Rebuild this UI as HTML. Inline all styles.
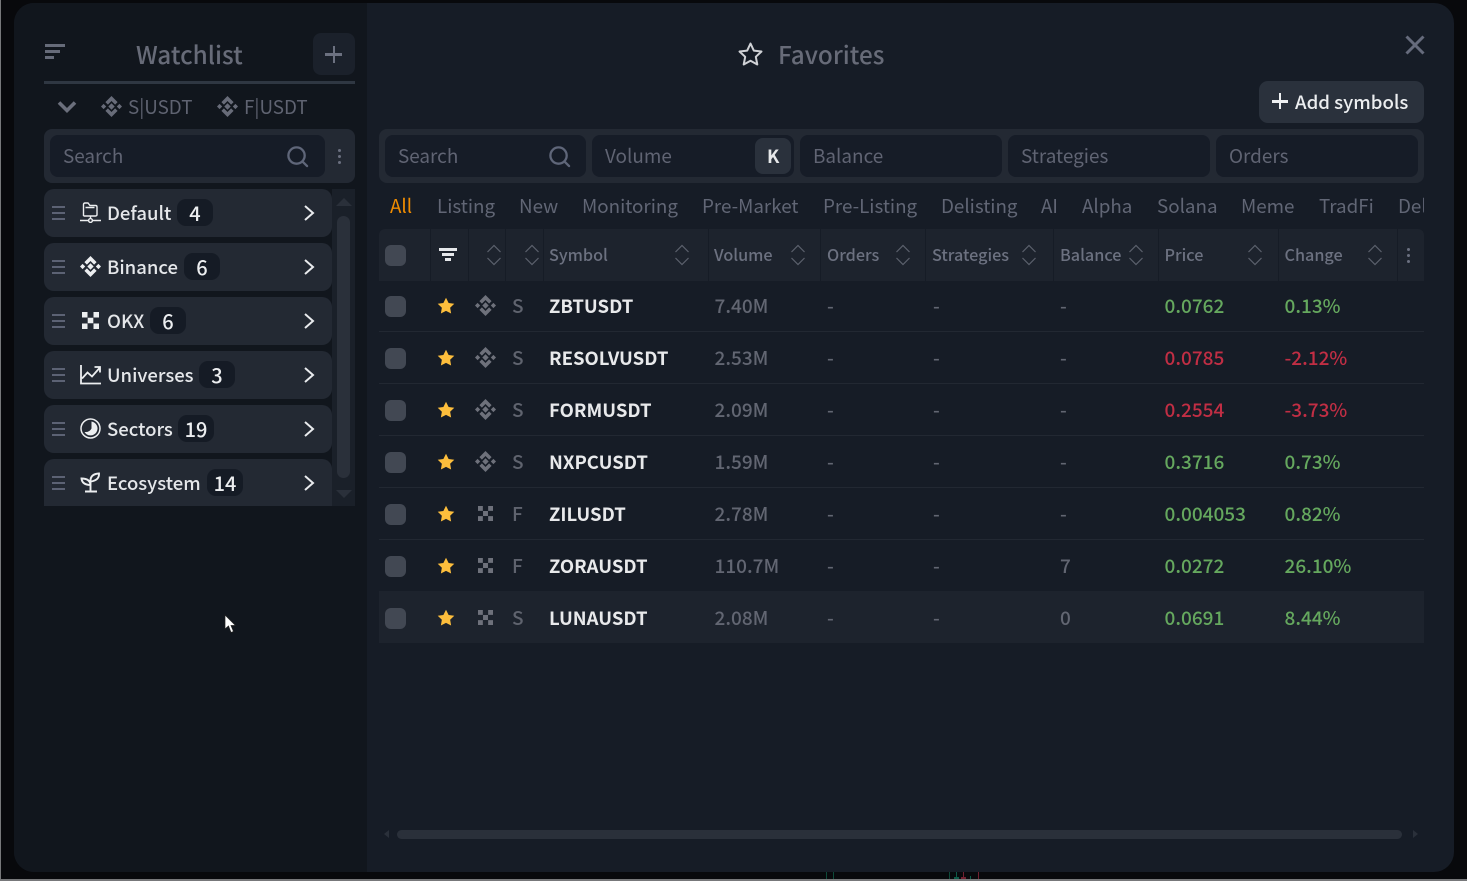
<!DOCTYPE html>
<html lang="en"><head><meta charset="utf-8"><title>Favorites</title>
<style>
*{box-sizing:border-box;margin:0;padding:0}
html,body{width:1467px;height:881px;overflow:hidden;background:#08090c}
body{position:relative;font-family:"Noto Sans CJK SC","Noto Sans CJK JP","Liberation Sans",sans-serif;font-size:19px;color:#6a6e7b}
.a,.t,svg{position:absolute}
.t{line-height:0;white-space:nowrap}
#edgeL{left:0;top:0;width:1px;height:881px;background:#77787a}
#edgeB{left:0;top:879px;width:1467px;height:2px;background:#77787a}
#modal{left:14px;top:3px;width:1440px;height:869px;background:#161c26;border-radius:20px;overflow:hidden}
#side{left:14px;top:3px;width:353px;height:869px;background:#11161d;border-radius:20px 0 0 20px}
.box{background:#232933;border-radius:8px}
.inp{background:#161c27;border-radius:8px;top:135px;height:42px}
.item{left:44px;width:288px;height:48px;background:#232933;border-radius:10px}
.item .nm{left:63px;top:23.500px;color:#e5e7ea;font-size:18.500px;font-weight:500}
.item .ct{top:10px;height:27px;width:36px;background:#151b25;border-radius:9px;color:#eceef0;font-size:20px;font-weight:500;text-align:center;line-height:27px}
.item .ic{left:36px;top:13px;width:21px;height:21px;color:#eceef0}
.item .hm{left:8px;top:17px;width:13px;height:14px;background:repeating-linear-gradient(#5c6274 0 2px,transparent 2px 6px)}
.item .ch{left:258px;top:15px;width:14px;height:18px}
.ph{font-size:18.900px;color:#606473;top:155.500px}
.tb{font-size:18.800px;color:#616675;top:15.500px}
.sep{top:229px;width:1px;height:52px;background:#161c26}
.th{top:254px;font-size:16.200px;font-weight:500;color:#6c7180}
.sort{top:244px;width:16px;height:22px}
.row{left:379px;width:1045px;height:52px;border-bottom:1px solid #222832}
.row .t{top:26px}
.cb{left:6px;top:16px;width:21px;height:21px;background:#424853;border-radius:6px}
.st{left:58px;top:17px;width:18px;height:18px}
.ex{left:96px;top:15px;width:21px;height:21px;color:#6e717b}
.ok{left:99px;top:18px;width:15px;height:15px}
.ty{left:133px;font-size:19px;font-weight:500;color:#5f636e}
.sy{left:170px;font-size:18.500px;font-weight:700;color:#e8e9eb}
.vo{left:335.500px;color:#626672;font-weight:500}
.or{left:448px;color:#626672;font-weight:500}
.sr{left:554px;color:#626672;font-weight:500}
.ba{left:681px;color:#626672;font-weight:500}
.pr{left:785.500px;font-weight:500}
.cg{left:905.500px;font-weight:500}
.g{color:#65a85e}.r{color:#c12e44}
</style></head><body>
<svg width="0" height="0" style="position:absolute"><defs>
<symbol id="bn" viewBox="0 0 21 21"><path fill="currentColor" d="M10.500 0 16.600 6.100 14.100 8.600 10.500 5 6.900 8.600 4.400 6.100ZM10.500 21 4.400 14.900 6.900 12.400 10.500 16 14.100 12.400 16.600 14.900ZM2.600 7.900 5.200 10.500 2.600 13.100 0 10.500ZM18.400 7.900 21 10.500 18.400 13.100 15.800 10.500ZM10.500 7.300 13.700 10.500 10.500 13.700 7.300 10.500Z"/></symbol>
<symbol id="ok" viewBox="0 0 17 17"><path fill="currentColor" d="M0 0h5.500v5.500H0zM11.500 0H17v5.500h-5.500zM5.700 5.700h5.600v5.600H5.700zM0 11.500h5.500V17H0zM11.500 11.500H17V17h-5.500z"/></symbol>
<symbol id="star" viewBox="0 0 20 20"><path fill="#fdbe3c" d="M10 .8 12.900 6.600 19.200 7.500 14.600 12 15.700 18.400 10 15.400 4.300 18.400 5.400 12 .8 7.500 7.100 6.600Z"/></symbol>
<symbol id="srt" viewBox="0 0 16 22"><path fill="none" stroke="#5c616d" stroke-width="1.200" d="M1.500 8 8 1.500 14.500 8M1.500 14 8 20.500 14.500 14"/></symbol>
<symbol id="chv" viewBox="0 0 14 18"><path fill="none" stroke="#e8eaed" stroke-width="2" d="M3 2 11 9 3 16"/></symbol>
<symbol id="mag" viewBox="0 0 24 24"><circle cx="11" cy="11" r="8.500" fill="none" stroke="#5f6679" stroke-width="2.400"/><path stroke="#5f6679" stroke-width="2.400" stroke-linecap="round" d="M17.500 17.500 22 22"/></symbol>
</defs></svg>

<div class="a" id="edgeL"></div><div class="a" id="edgeB"></div>
<div class="a" style="left:826px;top:872px;width:1px;height:7px;background:#0d4a3a"></div>
<div class="a" style="left:833px;top:872px;width:1px;height:7px;background:#0d4a3a"></div>
<div class="a" style="left:949px;top:872px;width:1px;height:7px;background:#0d4a3a"></div>
<div class="a" style="left:954px;top:877px;width:5px;height:2px;background:#0d5a48"></div>
<div class="a" style="left:956px;top:872px;width:1px;height:7px;background:#0d5a48"></div>
<div class="a" style="left:961px;top:877px;width:5px;height:2px;background:#702030"></div>
<div class="a" style="left:963px;top:872px;width:1px;height:7px;background:#702030"></div>
<div class="a" style="left:970px;top:876px;width:1px;height:3px;background:#0d5a48"></div>
<div class="a" style="left:978px;top:872px;width:1px;height:7px;background:#702030"></div>
<div class="a" id="modal"></div>
<div class="a" id="side"></div>

<!-- Sidebar header -->
<div class="a" style="left:45px;top:44px;width:20px;height:3px;background:#666b79"></div>
<div class="a" style="left:45px;top:50px;width:15px;height:3px;background:#666b79"></div>
<div class="a" style="left:45px;top:56px;width:9px;height:3px;background:#666b79"></div>
<div class="t" style="left:136px;top:54px;font-size:24.300px;font-weight:500;color:#676b78">Watchlist</div>
<div class="a" style="left:313px;top:33px;width:42px;height:42px;background:#1b212b;border-radius:8px"></div>
<div class="a" style="left:325px;top:53px;width:17px;height:2.500px;background:#6c7180"></div>
<div class="a" style="left:332.500px;top:46px;width:2.500px;height:17px;background:#6c7180"></div>
<div class="a" style="left:44px;top:81px;width:311px;height:3px;background:#2f3742"></div>
<svg style="left:57px;top:100px" width="20" height="14" viewBox="0 0 20 14"><path fill="none" stroke="#6b6f7c" stroke-width="3.600" d="M2 2.500 10 10.500 18 2.500"/></svg>
<svg style="left:101px;top:96px;color:#686c79" width="21" height="21"><use href="#bn"/></svg>
<div class="t" style="left:128px;top:106.500px;font-size:18.800px;color:#5f6371">S|USDT</div>
<svg style="left:217px;top:96px;color:#686c79" width="21" height="21"><use href="#bn"/></svg>
<div class="t" style="left:244px;top:106.500px;font-size:18.800px;color:#5f6371">F|USDT</div>

<!-- Sidebar search -->
<div class="a box" style="left:44px;top:129px;width:311px;height:54px"></div>
<div class="a inp" style="left:50px;width:275px"></div>
<div class="t ph" style="left:63px">Search</div>
<svg style="left:286px;top:145px" width="23" height="23"><use href="#mag"/></svg>
<div class="a" style="left:338px;top:149px;width:3px;height:3px;background:#6b7080;border-radius:50%;box-shadow:0 6px 0 #6b7080,0 12px 0 #6b7080"></div>

<!-- Sidebar scrollbar -->
<div class="a" style="left:332px;top:189px;width:23px;height:317px;background:#1a2029"></div>
<div class="a" style="left:336px;top:198px;border:8px solid transparent;border-top:0;border-bottom:8px solid #2a303a"></div>
<div class="a" style="left:337px;top:216px;width:13px;height:262px;background:#2a303a;border-radius:7px"></div>
<div class="a" style="left:336px;top:490px;border:8px solid transparent;border-bottom:0;border-top:8px solid #2a303a"></div>

<!-- Sidebar list -->
<div class="a item" style="top:189px"><div class="a hm"></div>
<svg class="ic" viewBox="0 0 21 21" width="21" height="21"><path fill="none" stroke="#eceef0" stroke-width="1.400" d="M3.500 14V2.500Q3.500 1 5 1H8L10 3.500H15.500Q17 3.500 17 5V12.500Q17 14 15.500 14H3.500M10.500 14V17M0 18.500H8.500M12.500 18.500H21M5.500 5.500H14.500"/><circle cx="10.500" cy="18.500" r="1.900" fill="none" stroke="#eceef0" stroke-width="1.400"/></svg>
<div class="t nm">Default</div><div class="a ct" style="left:133px">4</div><svg class="a ch"><use href="#chv"/></svg></div>

<div class="a item" style="top:243px"><div class="a hm"></div>
<svg class="ic" width="21" height="21"><use href="#bn"/></svg>
<div class="t nm">Binance</div><div class="a ct" style="left:140px">6</div><svg class="a ch"><use href="#chv"/></svg></div>

<div class="a item" style="top:297px"><div class="a hm"></div>
<svg class="ic" style="left:38px;top:15px;width:17px;height:17px"><use href="#ok"/></svg>
<div class="t nm">OKX</div><div class="a ct" style="left:106px">6</div><svg class="a ch"><use href="#chv"/></svg></div>

<div class="a item" style="top:351px"><div class="a hm"></div>
<svg class="ic" viewBox="0 0 21 21" width="21" height="21"><path fill="none" stroke="#eceef0" stroke-width="1.800" d="M1 1V19.500H21M2 14.500 7.500 8.500 12 12.500 19.500 4M14.500 3H20V8.500"/></svg>
<div class="t nm">Universes</div><div class="a ct" style="left:155px">3</div><svg class="a ch"><use href="#chv"/></svg></div>

<div class="a item" style="top:405px"><div class="a hm"></div>
<svg class="ic" viewBox="0 0 21 21" width="21" height="21"><circle cx="10.500" cy="10.500" r="9.500" fill="none" stroke="#eceef0" stroke-width="1.500"/><path fill="#eceef0" d="M11.500 3.500A7 7 0 1 1 4.500 14Q9.500 14.500 11.500 10.500Z"/></svg>
<div class="t nm">Sectors</div><div class="a ct" style="left:134px">19</div><svg class="a ch"><use href="#chv"/></svg></div>

<div class="a item" style="top:459px;height:47px;border-radius:10px 10px 0 0"><div class="a hm"></div>
<svg class="ic" viewBox="0 0 21 21" width="21" height="21"><path fill="none" stroke="#eceef0" stroke-width="1.900" d="M10.500 19V8Q11 2 19 1.500 19.500 8 11 9.500M10.500 13Q10 6.500 1.500 6.500 2 12.500 10 13M5 19.500H17"/></svg>
<div class="t nm">Ecosystem</div><div class="a ct" style="left:163px">14</div><svg class="a ch"><use href="#chv"/></svg></div>

<!-- Cursor -->
<svg style="left:224px;top:614px" width="13" height="20" viewBox="0 0 13 20"><path fill="#fff" stroke="#222" stroke-width=".7" d="M1 1V15L4.500 12 7 18.500 9.500 17.500 7 11.500H11.500Z"/></svg>

<!-- Main header -->
<svg style="left:737px;top:41px" width="27" height="27" viewBox="0 0 27 27"><path fill="none" stroke="#d0d2d6" stroke-width="2" stroke-linejoin="round" d="M13.500 2.500 16.800 9.600 24.500 10.500 18.800 15.800 20.300 23.500 13.500 19.700 6.700 23.500 8.200 15.800 2.500 10.500 10.200 9.600Z"/></svg>
<div class="t" style="left:778px;top:54px;font-size:24.300px;font-weight:500;color:#676b78">Favorites</div>
<svg style="left:1405px;top:35px" width="20" height="20" viewBox="0 0 20 20"><path stroke="#666b7c" stroke-width="3" d="M1.500 1.500 18.500 18.500M18.500 1.500 1.500 18.500"/></svg>
<div class="a" style="left:1259px;top:81px;width:165px;height:42px;background:#2a313c;border-radius:9px"></div>
<div class="a" style="left:1272px;top:100px;width:16px;height:2.500px;background:#eef0f2"></div>
<div class="a" style="left:1278.700px;top:93px;width:2.500px;height:16px;background:#eef0f2"></div>
<div class="t" style="left:1295px;top:101.500px;font-size:18.600px;font-weight:500;color:#eceef0">Add symbols</div>

<!-- Filters -->
<div class="a box" style="left:379px;top:129px;width:1045px;height:54px"></div>
<div class="a inp" style="left:385px;width:201px"></div>
<div class="t ph" style="left:398px">Search</div>
<svg style="left:548px;top:145px" width="23" height="23"><use href="#mag"/></svg>
<div class="a inp" style="left:592px;width:202px"></div>
<div class="t ph" style="left:605px">Volume</div>
<div class="a" style="left:755px;top:138px;width:36px;height:36px;background:#2a313c;border-radius:8px"></div>
<div class="t" style="left:767px;top:156px;color:#e6e8ea;font-size:18px;font-weight:700">K</div>
<div class="a inp" style="left:800px;width:202px"></div>
<div class="t ph" style="left:813px">Balance</div>
<div class="a inp" style="left:1008px;width:202px"></div>
<div class="t ph" style="left:1021px">Strategies</div>
<div class="a inp" style="left:1216px;width:202px"></div>
<div class="t ph" style="left:1229px">Orders</div>

<!-- Tabs -->
<div class="a" style="left:379px;top:190px;width:1045px;height:34px;overflow:hidden">
<div class="t tb" style="left:11px;color:#f08c00">All</div>
<div class="t tb" style="left:58px">Listing</div>
<div class="t tb" style="left:140px">New</div>
<div class="t tb" style="left:203px">Monitoring</div>
<div class="t tb" style="left:323px">Pre-Market</div>
<div class="t tb" style="left:444px">Pre-Listing</div>
<div class="t tb" style="left:562px">Delisting</div>
<div class="t tb" style="left:662px">AI</div>
<div class="t tb" style="left:703px">Alpha</div>
<div class="t tb" style="left:778px">Solana</div>
<div class="t tb" style="left:862px">Meme</div>
<div class="t tb" style="left:940px">TradFi</div>
<div class="t tb" style="left:1019px">Delisted</div>
</div>

<!-- Table header -->
<div class="a" style="left:379px;top:229px;width:1045px;height:52px;background:#1d232d;border-radius:6px 6px 0 0"></div>
<div class="a sep" style="left:430px"></div><div class="a sep" style="left:468px"></div><div class="a sep" style="left:505px"></div><div class="a sep" style="left:543px"></div><div class="a sep" style="left:708px"></div><div class="a sep" style="left:820px"></div><div class="a sep" style="left:925px"></div><div class="a sep" style="left:1053px"></div><div class="a sep" style="left:1158px"></div><div class="a sep" style="left:1278px"></div><div class="a sep" style="left:1397px"></div>
<div class="a" style="left:385px;top:245px;width:21px;height:21px;background:#424853;border-radius:6px"></div>
<div class="a" style="left:439px;top:248px;width:18px;height:2.500px;background:#e5e7ea"></div>
<div class="a" style="left:442px;top:253px;width:12px;height:2.500px;background:#e5e7ea"></div>
<div class="a" style="left:445px;top:258px;width:6px;height:2.500px;background:#e5e7ea"></div>
<svg class="sort" style="left:486px"><use href="#srt"/></svg>
<svg class="sort" style="left:524px"><use href="#srt"/></svg>
<div class="t th" style="left:549px">Symbol</div><svg class="sort" style="left:674px"><use href="#srt"/></svg>
<div class="t th" style="left:714px">Volume</div><svg class="sort" style="left:790px"><use href="#srt"/></svg>
<div class="t th" style="left:827px">Orders</div><svg class="sort" style="left:895px"><use href="#srt"/></svg>
<div class="t th" style="left:932px">Strategies</div><svg class="sort" style="left:1021px"><use href="#srt"/></svg>
<div class="t th" style="left:1060px">Balance</div><svg class="sort" style="left:1128px"><use href="#srt"/></svg>
<div class="t th" style="left:1164.500px">Price</div><svg class="sort" style="left:1247px"><use href="#srt"/></svg>
<div class="t th" style="left:1284.500px">Change</div><svg class="sort" style="left:1367px"><use href="#srt"/></svg>
<div class="a" style="left:1407px;top:248px;width:3px;height:3px;background:#6b7080;border-radius:50%;box-shadow:0 6px 0 #6b7080,0 12px 0 #6b7080"></div>

<!-- Rows -->
<div class="a" style="left:379px;top:591px;width:1045px;height:52px;background:#1d232d"></div>
<div class="a row" style="top:280px"><div class="a cb"></div><svg class="st"><use href="#star"/></svg><svg class="ex"><use href="#bn"/></svg><div class="t ty">S</div><div class="t sy">ZBTUSDT</div><div class="t vo">7.40M</div><div class="t or">-</div><div class="t sr">-</div><div class="t ba">-</div><div class="t pr g">0.0762</div><div class="t cg g">0.13%</div></div>
<div class="a row" style="top:332px"><div class="a cb"></div><svg class="st"><use href="#star"/></svg><svg class="ex"><use href="#bn"/></svg><div class="t ty">S</div><div class="t sy">RESOLVUSDT</div><div class="t vo">2.53M</div><div class="t or">-</div><div class="t sr">-</div><div class="t ba">-</div><div class="t pr r">0.0785</div><div class="t cg r">-2.12%</div></div>
<div class="a row" style="top:384px"><div class="a cb"></div><svg class="st"><use href="#star"/></svg><svg class="ex"><use href="#bn"/></svg><div class="t ty">S</div><div class="t sy">FORMUSDT</div><div class="t vo">2.09M</div><div class="t or">-</div><div class="t sr">-</div><div class="t ba">-</div><div class="t pr r">0.2554</div><div class="t cg r">-3.73%</div></div>
<div class="a row" style="top:436px"><div class="a cb"></div><svg class="st"><use href="#star"/></svg><svg class="ex"><use href="#bn"/></svg><div class="t ty">S</div><div class="t sy">NXPCUSDT</div><div class="t vo">1.59M</div><div class="t or">-</div><div class="t sr">-</div><div class="t ba">-</div><div class="t pr g">0.3716</div><div class="t cg g">0.73%</div></div>
<div class="a row" style="top:488px"><div class="a cb"></div><svg class="st"><use href="#star"/></svg><svg class="ex ok"><use href="#ok"/></svg><div class="t ty">F</div><div class="t sy">ZILUSDT</div><div class="t vo">2.78M</div><div class="t or">-</div><div class="t sr">-</div><div class="t ba">-</div><div class="t pr g">0.004053</div><div class="t cg g">0.82%</div></div>
<div class="a row" style="top:540px;border-bottom:0"><div class="a cb"></div><svg class="st"><use href="#star"/></svg><svg class="ex ok"><use href="#ok"/></svg><div class="t ty">F</div><div class="t sy">ZORAUSDT</div><div class="t vo">110.7M</div><div class="t or">-</div><div class="t sr">-</div><div class="t ba">7</div><div class="t pr g">0.0272</div><div class="t cg g">26.10%</div></div>
<div class="a row" style="top:592px;border-bottom:0"><div class="a cb"></div><svg class="st"><use href="#star"/></svg><svg class="ex ok"><use href="#ok"/></svg><div class="t ty">S</div><div class="t sy">LUNAUSDT</div><div class="t vo">2.08M</div><div class="t or">-</div><div class="t sr">-</div><div class="t ba">0</div><div class="t pr g">0.0691</div><div class="t cg g">8.44%</div></div>

<!-- Horizontal scrollbar -->
<div class="a" style="left:384px;top:830px;border:4px solid transparent;border-left:0;border-right:5px solid #2a303a"></div>
<div class="a" style="left:397px;top:830px;width:1005px;height:9px;background:#2a303a;border-radius:5px"></div>
<div class="a" style="left:1413px;top:830px;border:4px solid transparent;border-right:0;border-left:5px solid #2a303a"></div>
</body></html>
